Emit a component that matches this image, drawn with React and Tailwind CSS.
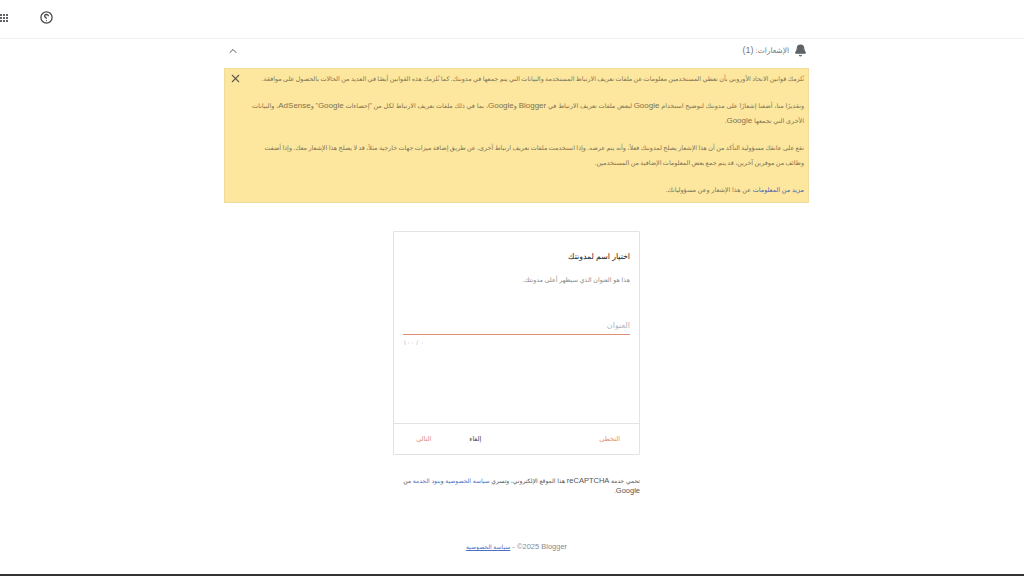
import { ChevronUp, X, Bell } from 'lucide-react'

function AppsIcon() {
  return (
    <div className="grid w-[8px] grid-cols-3 gap-[1px]">
      {[0, 1, 2, 3, 4, 5, 6, 7, 8].map((i) => (
        <span key={i} className="h-[2px] w-[2px] bg-[#5f6368]" />
      ))}
    </div>
  )
}

function HelpIcon() {
  return (
    <svg width="13" height="13" viewBox="0 0 13 13" fill="none" stroke="#4a4a4a" strokeWidth="1.3">
      <circle cx="6.5" cy="6.5" r="5.6" />
      <path d="M8.4 5.2c0-1.1-.9-1.7-1.9-1.7s-1.9.6-1.9 1.6c0 1.3 1.9 1.3 1.9 2.7" />
      <circle cx="6.5" cy="9.6" r=".6" fill="#4a4a4a" stroke="none" />
    </svg>
  )
}

// latin words sit larger than the arabic run around them
function L({ children }) {
  return <span className="text-[8px]">{children}</span>
}

export default function App() {
  return (
    <div className="relative h-[576px] w-[1024px] overflow-hidden bg-white font-['Liberation_Sans','DejaVu_Sans',sans-serif]">
      <header className="flex h-[39px] items-start border-b border-[#f1f1f1] pt-[11px]">
        <div className="mt-[3px] w-[40px]"><AppsIcon /></div>
        <HelpIcon />
      </header>

      <main dir="rtl" className="ml-[224px] w-[585px]">
        <div className="flex h-[29px] items-center justify-between pr-[2px] pb-[6px] pl-[3px]">
          <div className="flex items-center gap-[5px] text-[7.5px] text-[#757575]">
            <Bell size={13} fill="#5f6368" stroke="#5f6368" />
            <span>الإشعارات: <span className="text-[9px]">(1)</span></span>
          </div>
          <ChevronUp size={12} strokeWidth={2} className="text-[#555]" />
        </div>

        <section className="relative h-[135px] border border-[#f0dc9a] bg-[#fde79f] pt-[2px] pr-[4px] pl-[20px] text-[6.4px] leading-[15px] text-[#7d7250]">
          <p className="mb-[12px] [word-spacing:-0.4px]">تُلزمك قوانين الاتحاد الأوروبي بأن تعطي المستخدمين معلومات عن ملفات تعريف الارتباط المستخدمة والبيانات التي يتم جمعها في مدونتك. كما تُلزمك هذه القوانين أيضًا في العديد من الحالات بالحصول على موافقة.</p>
          <p className="mb-[12px]">وتقديرًا منا، أضفنا إشعارًا على مدونتك لتوضيح استخدام <L>Google</L> لبعض ملفات تعريف الارتباط في <L>Blogger</L> و<L>Google</L>، بما في ذلك ملفات تعريف الارتباط لكل من "إحصاءات <L>Google</L>" و<L>AdSense</L>، والبيانات الأخرى التي تجمعها <L>Google</L>.</p>
          <p className="mb-[12px] [word-spacing:-0.4px]">تقع على عاتقك مسؤولية التأكد من أن هذا الإشعار يصلح لمدونتك فعلاً، وأنه يتم عرضه. وإذا استخدمت ملفات تعريف ارتباط أخرى، عن طريق إضافة ميزات جهات خارجية مثلاً، قد لا يصلح هذا الإشعار معك. وإذا أضفت وظائف من موفرين آخرين، قد يتم جمع بعض المعلومات الإضافية من المستخدمين.</p>
          <p><span className="text-[#4a5fb0]">مزيد من المعلومات</span> عن هذا الإشعار وعن مسؤولياتك.</p>
          <X size={13} strokeWidth={2} className="absolute top-[3px] left-[4px] text-[#5f5a48]" />
        </section>

        <section className="mx-auto mt-[28px] flex h-[224px] w-[247px] flex-col rounded-[1px] border border-[#e3e3e3]">
          <div className="flex-1 px-[9px]">
            <h2 className="mt-[18px] text-[7.8px] leading-[14px] text-[#222]">اختيار اسم لمدونتك</h2>
            <p className="mt-[10px] text-[6.3px] leading-[12px] text-[#8a8a8a]">هذا هو العنوان الذي سيظهر أعلى مدونتك.</p>
            <div className="mt-[33px] border-b border-[#e08e73] pb-[2px] text-[8px] leading-[13px] text-[#b5b5b5]">العنوان</div>
            <div className="mt-[3px] text-left text-[7px] leading-[10px] text-[#c4c4c4]">٠ / ١٠٠</div>
          </div>
          <div className="flex h-[31px] items-center border-t border-[#e3e3e3] text-[6.5px]">
            <span className="mr-[19px] text-[#e08e73]">التخطي</span>
            <span className="mr-[118px] text-[#444]">إلغاء</span>
            <span className="mr-[38px] text-[#e08e73]">التالي</span>
          </div>
        </section>

        <p className="mx-auto mt-[21px] w-[247px] pl-[4px] text-[6px] leading-[10px] text-[#555]">
          تحمي خدمة <span className="text-[7.5px]">reCAPTCHA</span> هذا الموقع الإلكتروني، وتسري <span className="text-[#4a6fc4]">سياسة الخصوصية</span> و<span className="text-[#4a6fc4]">بنود الخدمة</span> من <span className="text-[7.5px]">Google</span>.
        </p>

        <p dir="ltr" className="mt-[45px] text-center text-[7.5px] leading-[12px] text-[#8a8a8a]">
          <span dir="rtl" className="text-[6px] text-[#4a6fc4] underline">سياسة الخصوصية</span> - ©2025 Blogger
        </p>
      </main>

      <div className="absolute bottom-0 left-0 h-[2px] w-full bg-[#333]" />
    </div>
  )
}
